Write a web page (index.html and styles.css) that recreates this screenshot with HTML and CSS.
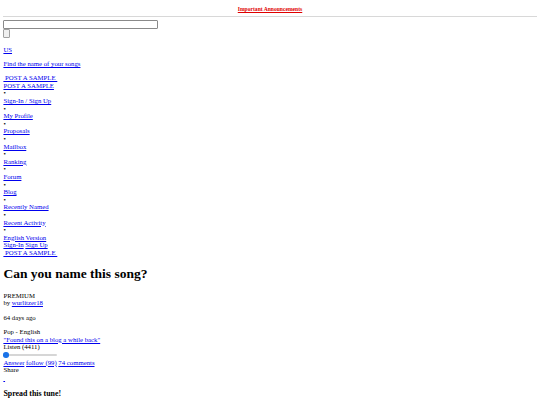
FILE: index.html
```html
<!DOCTYPE html>
<html lang="en">
<head>
  <meta charset="UTF-8" />
  <meta name="viewport" content="width=device-width, initial-scale=1" />
  <title>Can you name this song?</title>
  <link rel="stylesheet" href="styles.css">
</head>
<body>

<div class="topbar">
  <a class="announce" href="#">Important Announcements</a>
</div>
<hr class="rule" />

<form class="search">
  <input type="text" class="search-input" />
  <button type="submit" class="search-btn"></button>
</form>

<p><a href="#">US</a></p>
<p><a href="#">Find the name of your songs</a></p>

<div class="post-links">
  <a href="#">&nbsp;POST A SAMPLE&nbsp;</a>
  <a href="#">POST A SAMPLE</a>
</div>

<ul class="menu">
  <li><span class="dot">•</span><a href="#">Sign-In / Sign Up</a></li>
  <li><span class="dot">•</span><a href="#">My Profile</a></li>
  <li><span class="dot">•</span><a href="#">Proposals</a></li>
  <li><span class="dot">•</span><a href="#">Mailbox</a></li>
  <li><span class="dot">•</span><a href="#">Ranking</a></li>
  <li><span class="dot">•</span><a href="#">Forum</a></li>
  <li><span class="dot">•</span><a href="#">Blog</a></li>
  <li><span class="dot">•</span><a href="#">Recently Named</a></li>
  <li><span class="dot">•</span><a href="#">Recent Activity</a></li>
  <li><span class="dot">•</span><a href="#">English Version</a></li>
</ul>

<div class="mobile-links">
  <div><a href="#">Sign-In</a> <a href="#">Sign Up</a></div>
  <div><a href="#">&nbsp;POST A SAMPLE&nbsp;</a></div>
</div>

<main class="song">
  <h1>Can you name this song?</h1>
  <div class="badge">PREMIUM</div>
  <div class="author">by <a href="#">wurlitzer18</a></div>
  <p>64 days ago</p>
  <div class="genre">Pop - English</div>
  <div><a href="#">"Found this on a blog a while back"</a></div>
  <div>Listen (4411)</div>
  <input type="range" class="listen-bar" min="0" max="100" value="0" />
  <div class="song-actions">
    <a href="#">Answer</a> <a href="#">follow (99)</a> <a href="#">74 comments</a>
  </div>
  <div>Share</div>
  <div class="share-link"><a href="#">&nbsp;</a></div>
  <h3>Spread this tune!</h3>
</main>

</body>
</html>
```

FILE: styles.css
```css
body {
  margin: 3.4px;
  font-family: "Liberation Serif", "Times New Roman", serif;
  font-size: 6.75px;
  line-height: 7.6px;
  color: #000;
  background: #fff;
}
a {
  color: #0000ee;
}
p {
  margin: 6.6px 0;
}
.topbar {
  text-align: center;
  padding-top: 3px;
  font-size: 5.6px;
  line-height: 6.5px;
  font-weight: bold;
}
.announce {
  color: #e00000;
}
.rule {
  border: 0;
  border-top: 1px solid #d8d8d8;
  margin: 3.5px 0 2.5px;
}
.search {
  margin: 0;
}
.search-input {
  display: block;
  box-sizing: border-box;
  width: 155px;
  height: 9px;
  margin: 0;
  padding: 0;
  border: 1px solid #8a8a8a;
  border-radius: 1px;
  background: #fff;
}
.search-btn {
  display: block;
  box-sizing: border-box;
  width: 7px;
  height: 9px;
  margin: 0;
  padding: 0;
  border: 1px solid #a0a0a0;
  border-radius: 1px;
  background: #efefef;
}
.search + p {
  margin-top: 8px;
}
.post-links a,
.menu a {
  display: block;
}
.post-links a {
  width: max-content;
}
.menu {
  list-style: none;
  margin: 0;
  padding: 0;
}
.dot {
  display: block;
}
.song h1 {
  font-size: 13.5px;
  line-height: 15.5px;
  margin: 9px 0 10.5px;
}
.song p {
  margin: 7px 0;
}
.song h3 {
  font-size: 7.9px;
  line-height: 9px;
  margin: 7.6px 0;
}
.listen-bar {
  -webkit-appearance: none;
  appearance: none;
  display: block;
  width: 54px;
  height: 6.5px;
  margin: 0.6px 0;
  padding: 0;
  background: transparent;
}
.listen-bar::-webkit-slider-runnable-track {
  height: 2.4px;
  border-radius: 2px;
  background: #d6d6d6;
}
.listen-bar::-webkit-slider-thumb {
  -webkit-appearance: none;
  width: 5.5px;
  height: 5.5px;
  margin-top: -1.55px;
  border-radius: 50%;
  background: #1a73e8;
}
.share-link {
  margin-top: 0;
}
```
